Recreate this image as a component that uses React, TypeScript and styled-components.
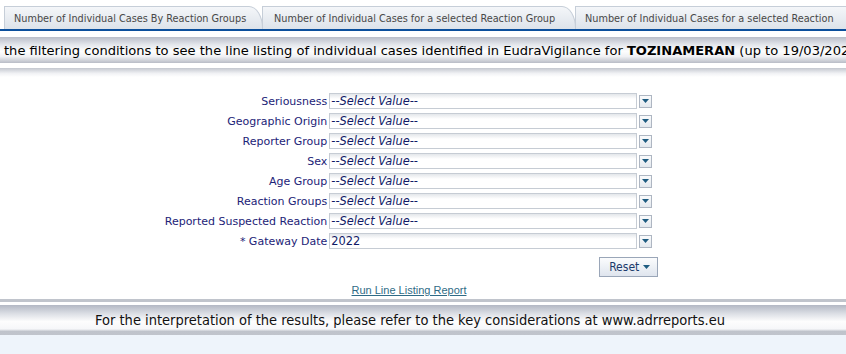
import React from 'react';
import styled, { createGlobalStyle } from 'styled-components';

const GlobalStyle = createGlobalStyle`
	html, body {
		margin: 0;
		padding: 0;
		background: #fff;
	}
	body {
		width: 846px;
		height: 354px;
		overflow: hidden;
		font-family: 'DejaVu Sans', Verdana, sans-serif;
	}
`

const Page = styled.div`
	display: flex;
	flex-direction: column;
	height: 354px;
`

const TabBar = styled.div`
	display: flex;
	height: 31px;
	padding-top: 6px;
	box-sizing: border-box;
	border-bottom: 2px solid #0b4f9c;
	overflow: hidden;
	padding-left: 4px;
`

const Tab = styled.div<{ $width: number; $pad: number }>`
	flex: 0 0 ${p => p.$width}px;
	display: flex;
	align-items: center;
	padding-left: ${p => p.$pad}px;
	box-sizing: border-box;
	font-family: 'DejaVu Sans Condensed', 'DejaVu Sans', sans-serif;
	font-size: 10.8px;
	color: #484848;
	background: linear-gradient(#f4f6f9, #dde3ea);
	border: 1px solid #c6ced8;
	border-bottom: none;
	border-top-right-radius: 14px 22px;
	margin-right: -1px;
	white-space: nowrap;
`

const Banner = styled.div`
	height: 26px;
	margin-top: 6px;
	display: flex;
	align-items: center;
	padding-left: 4px;
	white-space: nowrap;
	overflow: hidden;
	font-size: 13.05px;
	color: #000;
	background: linear-gradient(#b9bdc8 0%, #e4e7ec 30%, #fdfdfd 55%, #f0f1f4 75%, #b8bcc6 100%);
	b {
		font-weight: bold;
	}
`

const Shade = styled.div`
	height: 9px;
	margin-top: 5px;
	background: linear-gradient(#c3c7cf, #f1f2f5 60%, #fff);
`

const FormArea = styled.div`
	height: 222px;
	display: flex;
	flex-direction: column;
	align-items: center;
	padding-top: 16px;
	padding-right: 28px;
	box-sizing: border-box;
`

const Form = styled.div`
	display: flex;
	flex-direction: column;
`

const FormGrid = styled.div`
	display: grid;
	grid-template-columns: auto 308px 14px;
	column-gap: 2px;
	row-gap: 4px;
	align-items: center;
`

const Label = styled.label`
	text-align: right;
	font-size: 11px;
	color: #1c2377;
	white-space: nowrap;
`

const Field = styled.div<{ $italic?: boolean }>`
	height: 16px;
	box-sizing: border-box;
	border: 1px solid #c6ccd4;
	background: linear-gradient(#e3e6ea, #fff 5px);
	display: flex;
	align-items: center;
	padding-left: 1px;
	font-size: 11.4px;
	color: #101a66;
	font-style: ${p => (p.$italic ? 'italic' : 'normal')};
`

const DropButton = styled.div`
	width: 13px;
	height: 13px;
	box-sizing: border-box;
	border: 1px solid #aeb6c2;
	background: linear-gradient(#fafbfc, #e3e8ee);
	display: flex;
	align-items: center;
	justify-content: center;
`

const ButtonRow = styled.div`
	display: flex;
	justify-content: flex-end;
	margin-top: 8px;
	margin-right: -5px;
`

const ResetButton = styled.div`
	display: flex;
	align-items: center;
	gap: 4px;
	height: 20px;
	padding: 0 7px 0 9px;
	box-sizing: border-box;
	border: 1px solid #9aa6b8;
	background: linear-gradient(#fbfcfd, #dfe5ee);
	font-family: 'DejaVu Sans Condensed', 'DejaVu Sans', sans-serif;
	font-size: 12px;
	color: #1b3a6b;
`

const RunLink = styled.a`
	margin-top: 7px;
	font-family: 'Liberation Sans Narrow', 'Liberation Sans', Arial, sans-serif;
	font-size: 11px;
	color: #2f6b86;
	text-decoration: underline;
`

const FooterTop = styled.div`
	height: 3px;
	background: #c0c4cc;
`

const Footer = styled.div`
	margin-top: 3px;
	height: 30px;
	display: flex;
	align-items: center;
	justify-content: center;
	padding-right: 26px;
	font-family: 'DejaVu Sans Condensed', 'DejaVu Sans', sans-serif;
	font-size: 14.5px;
	color: #111;
	background: linear-gradient(#b3b8c4 0%, #dde0e6 30%, #fdfdfd 55%, #f6f7f9 80%, #bfc3cb 88%, #c0c4cc 100%);
`

const Bottom = styled.div`
	flex: 1;
	background: #eef4fb;
`

const Arrow = () => (
	<svg width="7" height="4" viewBox="0 0 7 4">
		<polygon points="0,0 7,0 3.5,4" fill="#1d5b80" />
	</svg>
)

const fields = [
	{ label: 'Seriousness', value: '--Select Value--', italic: true },
	{ label: 'Geographic Origin', value: '--Select Value--', italic: true },
	{ label: 'Reporter Group', value: '--Select Value--', italic: true },
	{ label: 'Sex', value: '--Select Value--', italic: true },
	{ label: 'Age Group', value: '--Select Value--', italic: true },
	{ label: 'Reaction Groups', value: '--Select Value--', italic: true },
	{ label: 'Reported Suspected Reaction', value: '--Select Value--', italic: true },
	{ label: '* Gateway Date', value: '2022', italic: false },
]

const App = () => {
	return (
		<React.Fragment>
			<GlobalStyle />
			<Page>
				<TabBar>
					<Tab $width={259} $pad={9}>Number of Individual Cases By Reaction Groups</Tab>
					<Tab $width={314} $pad={11}>Number of Individual Cases for a selected Reaction Group</Tab>
					<Tab $width={290} $pad={9}>Number of Individual Cases for a selected Reaction</Tab>
				</TabBar>
				<Banner>
					the filtering conditions to see the line listing of individual cases identified in EudraVigilance for&nbsp;<b>TOZINAMERAN</b>&nbsp;(up to 19/03/2022)
				</Banner>
				<Shade />
				<FormArea>
					<Form>
						<FormGrid>
							{fields.map(f => (
								<React.Fragment key={f.label}>
									<Label>{f.label}</Label>
									<Field $italic={f.italic}>{f.value}</Field>
									<DropButton><Arrow /></DropButton>
								</React.Fragment>
							))}
						</FormGrid>
						<ButtonRow>
							<ResetButton>Reset <Arrow /></ResetButton>
						</ButtonRow>
					</Form>
					<RunLink>Run Line Listing Report</RunLink>
				</FormArea>
				<FooterTop />
				<Footer>For the interpretation of the results, please refer to the key considerations at www.adrreports.eu</Footer>
				<Bottom />
			</Page>
		</React.Fragment>
	);
};

export default App;
